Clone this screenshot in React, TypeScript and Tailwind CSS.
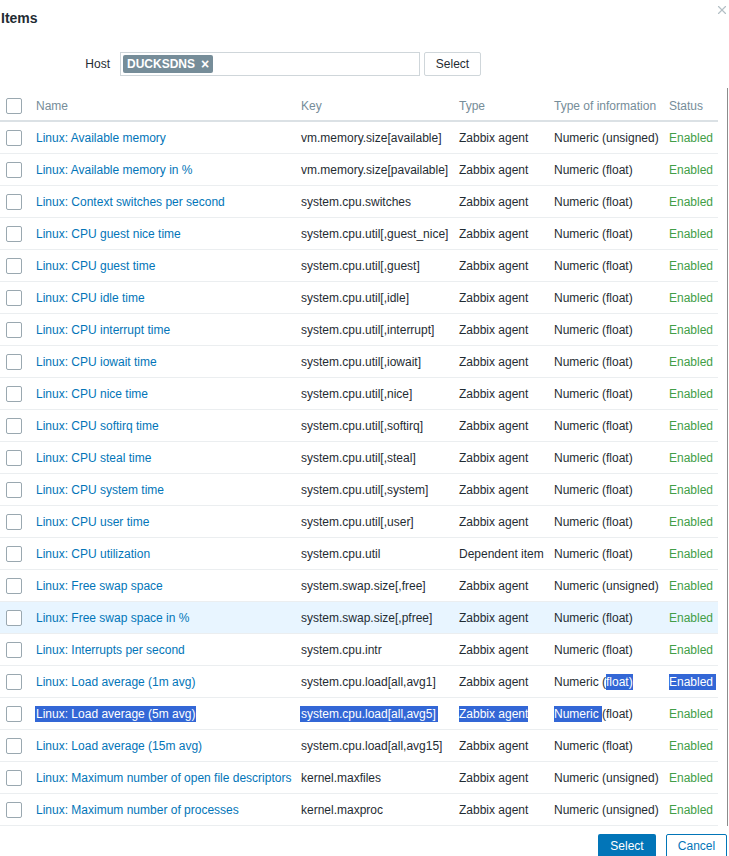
import { X } from "lucide-react";

type Row = {
  name: string;
  key: string;
  type: string;
  info: string;
  sel?: "a" | "b";
};

const rows: Row[] = [
  { name: "Linux: Available memory", key: "vm.memory.size[available]", type: "Zabbix agent", info: "Numeric (unsigned)" },
  { name: "Linux: Available memory in %", key: "vm.memory.size[pavailable]", type: "Zabbix agent", info: "Numeric (float)" },
  { name: "Linux: Context switches per second", key: "system.cpu.switches", type: "Zabbix agent", info: "Numeric (float)" },
  { name: "Linux: CPU guest nice time", key: "system.cpu.util[,guest_nice]", type: "Zabbix agent", info: "Numeric (float)" },
  { name: "Linux: CPU guest time", key: "system.cpu.util[,guest]", type: "Zabbix agent", info: "Numeric (float)" },
  { name: "Linux: CPU idle time", key: "system.cpu.util[,idle]", type: "Zabbix agent", info: "Numeric (float)" },
  { name: "Linux: CPU interrupt time", key: "system.cpu.util[,interrupt]", type: "Zabbix agent", info: "Numeric (float)" },
  { name: "Linux: CPU iowait time", key: "system.cpu.util[,iowait]", type: "Zabbix agent", info: "Numeric (float)" },
  { name: "Linux: CPU nice time", key: "system.cpu.util[,nice]", type: "Zabbix agent", info: "Numeric (float)" },
  { name: "Linux: CPU softirq time", key: "system.cpu.util[,softirq]", type: "Zabbix agent", info: "Numeric (float)" },
  { name: "Linux: CPU steal time", key: "system.cpu.util[,steal]", type: "Zabbix agent", info: "Numeric (float)" },
  { name: "Linux: CPU system time", key: "system.cpu.util[,system]", type: "Zabbix agent", info: "Numeric (float)" },
  { name: "Linux: CPU user time", key: "system.cpu.util[,user]", type: "Zabbix agent", info: "Numeric (float)" },
  { name: "Linux: CPU utilization", key: "system.cpu.util", type: "Dependent item", info: "Numeric (float)" },
  { name: "Linux: Free swap space", key: "system.swap.size[,free]", type: "Zabbix agent", info: "Numeric (unsigned)" },
  { name: "Linux: Free swap space in %", key: "system.swap.size[,pfree]", type: "Zabbix agent", info: "Numeric (float)" },
  { name: "Linux: Interrupts per second", key: "system.cpu.intr", type: "Zabbix agent", info: "Numeric (float)" },
  { name: "Linux: Load average (1m avg)", key: "system.cpu.load[all,avg1]", type: "Zabbix agent", info: "Numeric (float)", sel: "a" },
  { name: "Linux: Load average (5m avg)", key: "system.cpu.load[all,avg5]", type: "Zabbix agent", info: "Numeric (float)", sel: "b" },
  { name: "Linux: Load average (15m avg)", key: "system.cpu.load[all,avg15]", type: "Zabbix agent", info: "Numeric (float)" },
  { name: "Linux: Maximum number of open file descriptors", key: "kernel.maxfiles", type: "Zabbix agent", info: "Numeric (unsigned)" },
  { name: "Linux: Maximum number of processes", key: "kernel.maxproc", type: "Zabbix agent", info: "Numeric (unsigned)" },
];

const cols = "grid grid-cols-[30px_265px_158px_95px_115px_55px]";

function Sel({ children, className = "" }: { children: React.ReactNode; className?: string }) {
  return (
    <span className={`inline-block h-[16px] bg-[#3367d6] leading-[16px] text-white ${className}`}>{children}</span>
  );
}

function Checkbox() {
  return <span className="block h-[16px] w-[16px] rounded-[2px] border border-[#9aa8b0] bg-white" />;
}

function ItemRow({ row, hover }: { row: Row; hover: boolean }) {
  const cell = "flex items-center px-[6px] whitespace-nowrap";
  return (
    <div className={`${cols} h-[32px] border-b border-[#ebeef0] ${hover ? "bg-[#e8f5ff]" : ""}`}>
      <div className="flex items-center pl-[6px]">
        <Checkbox />
      </div>
      <div className={`${cell} text-[#0275b8]`}>
        {row.sel === "b" ? <Sel className="-ml-[1px] pl-[1px] pr-[1px]">{row.name}</Sel> : row.name}
      </div>
      <div className={cell}>{row.sel === "b" ? <Sel className="-ml-[1px] pl-[1px] pr-[2px]">{row.key}</Sel> : row.key}</div>
      <div className={cell}>{row.sel === "b" ? <Sel>{row.type}</Sel> : row.type}</div>
      <div className={cell}>
        {row.sel === "a" ? (
          <>
            Numeric (<Sel>float)</Sel>
          </>
        ) : row.sel === "b" ? (
          <>
            <Sel>Numeric&nbsp;</Sel>(float)
          </>
        ) : (
          row.info
        )}
      </div>
      <div className={`${cell} text-[#429e47]`}>
        {row.sel === "a" ? <Sel className="pr-[3px]">Enabled</Sel> : "Enabled"}
      </div>
    </div>
  );
}

export default function App() {
  return (
    <div className="h-[856px] w-[729px] overflow-hidden bg-white font-['Liberation_Sans',Arial,sans-serif] text-[12px] text-[#1f2c33]">
      <div className="flex h-[36px] items-start justify-between">
        <h1 className="pl-[1px] pt-[9px] text-[14px] font-bold leading-[18px]">Items</h1>
        <X size={14} strokeWidth={2} className="mr-[0px] mt-[3px] text-[#b3bfc5]" />
      </div>

      <div className="mt-[16px] flex h-[24px] items-center">
        <span className="w-[110px] text-right">Host</span>
        <div className="ml-[10px] flex h-[24px] w-[300px] items-center border border-[#cfd6da] bg-white pl-[2px]">
          <span className="flex h-[18px] items-center gap-[6px] rounded-[2px] bg-[#768d99] px-[4px] font-bold leading-none text-white">
            DUCKSDNS
            <span className="text-[14px] leading-none">×</span>
          </span>
        </div>
        <button className="ml-[4px] h-[24px] w-[57px] rounded-[2px] border border-[#cfd6da] bg-white text-[12px] text-[#1f2c33]">
          Select
        </button>
      </div>

      <div className="mt-[12px] flex">
        <div className="w-[718px]">
          <div className={`${cols} h-[34px] border-b-2 border-[#dbe1e5] pt-[3px] text-[#768d99]`}>
            <div className="flex items-center pl-[6px]">
              <Checkbox />
            </div>
            <div className="flex items-center px-[6px]">Name</div>
            <div className="flex items-center px-[6px]">Key</div>
            <div className="flex items-center px-[6px]">Type</div>
            <div className="flex items-center px-[6px] whitespace-nowrap">Type of information</div>
            <div className="flex items-center px-[6px]">Status</div>
          </div>
          {rows.map((r, i) => (
            <ItemRow key={r.key} row={r} hover={i === 15} />
          ))}
        </div>
        <div className="w-[10px] border-r border-[#8c8c8c]" />
      </div>

      <div className="mt-[8px] flex justify-end gap-[10px] pr-[2px]">
        <button className="h-[24px] w-[58px] rounded-[2px] bg-[#0275b8] text-[12px] text-white">Select</button>
        <button className="h-[24px] w-[61px] rounded-[2px] border border-[#0275b8] bg-white text-[12px] text-[#0275b8]">
          Cancel
        </button>
      </div>
    </div>
  );
}
